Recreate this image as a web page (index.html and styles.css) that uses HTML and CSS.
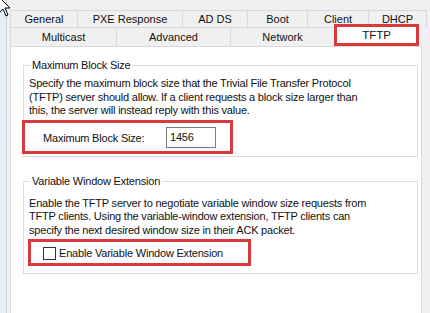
FILE: index.html
```html
<!DOCTYPE html>
<html>
<head>
<meta charset="utf-8">
<link rel="stylesheet" href="styles.css">
</head>
<body>
<div class="screen">
  <div class="strip"></div>
  <div class="main">
    <div class="tabrow row1">
      <div class="tab">General</div>
      <div class="tab">PXE Response</div>
      <div class="tab">AD DS</div>
      <div class="tab">Boot</div>
      <div class="tab">Client</div>
      <div class="tab">DHCP</div>
    </div>
    <div class="tabrow row2">
      <div class="tab">Multicast</div>
      <div class="tab">Advanced</div>
      <div class="tab">Network</div>
      <div class="tab selected">TFTP</div>
    </div>
    <div class="panel">
      <div class="group g1">
        <div class="legend">Maximum Block Size</div>
        <p class="desc">Specify the maximum block size that the Trivial File Transfer Protocol<br>(TFTP) server should allow. If a client requests a block size larger than<br>this, the server will instead reply with this value.</p>
        <div class="mark mark-size">
          <span class="field-label">Maximum Block Size:</span>
          <div class="input">1456</div>
        </div>
      </div>
      <div class="group g2">
        <div class="legend">Variable Window Extension</div>
        <p class="desc">Enable the TFTP server to negotiate variable window size requests from<br>TFTP clients. Using the variable-window extension, TFTP clients can<br>specify the next desired window size in their ACK packet.</p>
        <div class="mark mark-check">
          <span class="checkbox"></span>
          <span class="check-label">Enable Variable Window Extension</span>
        </div>
      </div>
    </div>
  </div>
  <svg class="cursor" width="14" height="22" viewBox="0 0 14 22"><path d="M1 1 L1 17 L5 13 L8 20 L10 19 L7 12 L12 12 Z" fill="#fff" stroke="#000" stroke-width="1" stroke-linejoin="miter"/></svg>
</div>
</body>
</html>
```

FILE: styles.css
```css
* { box-sizing: border-box; }

body {
  margin: 0;
  background: #f0f0f0;
  font-family: "Liberation Sans", Arial, sans-serif;
  font-size: 11px;
  letter-spacing: -0.2px;
  color: #111;
  width: 430px;
  height: 313px;
  overflow: hidden;
}

.screen {
  display: flex;
  height: 313px;
  position: relative;
}

.strip {
  width: 7px;
  flex: none;
  background: #e2f1f7;
  border-right: 1px solid #c9d6dc;
}

.main {
  flex: 1;
  padding-top: 10px;
  padding-left: 3px;
}

.tabrow { display: grid; }
.row1 { grid-template-columns: 67px 105px 65px 60px 61px 59px; height: 17px; }
.row2 { grid-template-columns: 106px 114px 104px 86px; height: 19px; }

.tab {
  border-top: 1px solid #d9d9d9;
  border-left: 1px solid #d9d9d9;
  display: flex;
  align-items: center;
  justify-content: center;
  background: #f0f0f0;
  height: 100%;
  white-space: nowrap;
  letter-spacing: 0;
}
.row1 .tab:last-child { border-right: 1px solid #d9d9d9; }

.tab.selected {
  background: #fff;
  border: 3px solid #d8393b;
  margin-top: -3px;
  height: 22px;
  width: 85px;
  position: relative;
  z-index: 1;
  font-size: 11.5px;
}

.panel {
  width: 412px;
  height: 280px;
  background: #fff;
  border: 1px solid #d9d9d9;
  padding: 18px 3px 0 12px;
}

.group {
  border: 1px solid #dcdcdc;
  padding: 0 5px;
}
.g1 { padding-bottom: 2px; }
.g2 { margin-top: 24px; padding-bottom: 7px; }

.legend {
  display: block;
  width: max-content;
  background: #fff;
  padding: 0 2px;
  margin: -8px 0 0 1px;
  line-height: 14px;
}

.desc {
  margin: 5px 0 0;
  line-height: 13.5px;
  white-space: nowrap;
}
.g2 .desc { margin-top: 9px; }

.mark {
  border: 3px solid #d8393b;
  display: flex;
  align-items: center;
}

.mark-size {
  margin: 2px 0 0 -7px;
  width: 211px;
  height: 34px;
  padding: 2px 0 0 18px;
}

.field-label { width: 123px; }

.input {
  width: 50px;
  height: 21px;
  border: 1px solid #7a7a7a;
  padding-left: 3px;
  line-height: 19px;
}

.mark-check {
  margin: 2px 0 0 -1px;
  width: 223px;
  height: 27px;
  padding: 1px 0 0 12px;
}

.checkbox {
  width: 13px;
  height: 13px;
  border: 1px solid #333;
  background: #fff;
  margin-right: 3px;
}

.cursor {
  position: absolute;
  left: -2px;
  top: -4px;
}
```
